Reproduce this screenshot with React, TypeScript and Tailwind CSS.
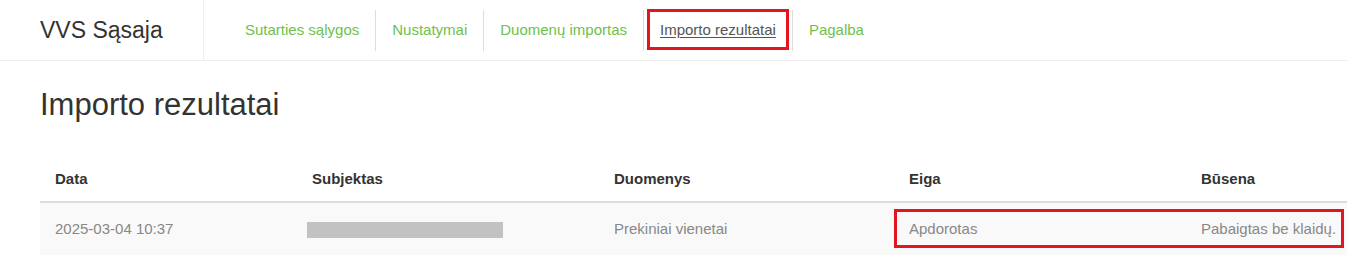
import React from "react";

const navItems = ["Sutarties sąlygos", "Nustatymai", "Duomenų importas", "Importo rezultatai", "Pagalba"];

export default function App() {
  return (
    <div className="w-[1347px] h-[255px] overflow-hidden bg-white" style={{ fontFamily: '"Liberation Sans", Arial, sans-serif' }}>
      <header className="flex h-[61px] border-b border-[#eeeeee]">
        <div className="w-[204px] shrink-0 border-r border-[#eeeeee] flex items-center pl-[40px] text-[23px] text-[#333333]">
          VVS Sąsaja
        </div>
        <nav className="flex items-center pl-[25px]">
          {navItems.map((item, i) => (
            <div
              key={item}
              className={`relative h-[41px] flex items-center px-[16px] text-[15px] ${i > 0 ? "border-l border-[#dddddd]" : ""} ${
                item === "Importo rezultatai" ? "text-[#555555] underline underline-offset-2" : "text-[#6dc14c]"
              }`}
            >
              {item}
              {item === "Importo rezultatai" && (
                <div className="absolute left-[3px] right-[3px] top-[-1px] bottom-[1px] border-[3px] border-[#e3161f]" />
              )}
            </div>
          ))}
        </nav>
      </header>
      <main className="pl-[40px]">
        <h1 className="mt-[24px] text-[31px] leading-[40px] text-[#333333]">Importo rezultatai</h1>
        <div className="mt-[31px] w-[1346px]">
          <div className="grid grid-cols-[257px_302px_295px_292px_200px] text-[15px] font-bold text-[#333333] border-b-2 border-[#dddddd] h-[47px] items-center pt-[2px]">
            <div className="pl-[15px]">Data</div>
            <div className="pl-[15px]">Subjektas</div>
            <div className="pl-[15px]">Duomenys</div>
            <div className="pl-[15px]">Eiga</div>
            <div className="pl-[15px]">Būsena</div>
          </div>
          <div className="relative grid grid-cols-[257px_302px_295px_292px_200px] text-[15px] text-[#888888] bg-[#f9f9f9] h-[53px] items-center">
            <div className="pl-[15px]">2025-03-04 10:37</div>
            <div className="pl-[10px]">
              <div className="w-[196px] h-[16px] bg-[#c2c2c2]" />
            </div>
            <div className="pl-[15px]">Prekiniai vienetai</div>
            <div className="pl-[15px]">Apdorotas</div>
            <div className="pl-[15px] whitespace-nowrap">Pabaigtas be klaidų.</div>
            <div className="absolute left-[854px] w-[450px] top-[6px] h-[39px] border-[3px] border-[#e3161f]" />
          </div>
        </div>
      </main>
    </div>
  );
}
